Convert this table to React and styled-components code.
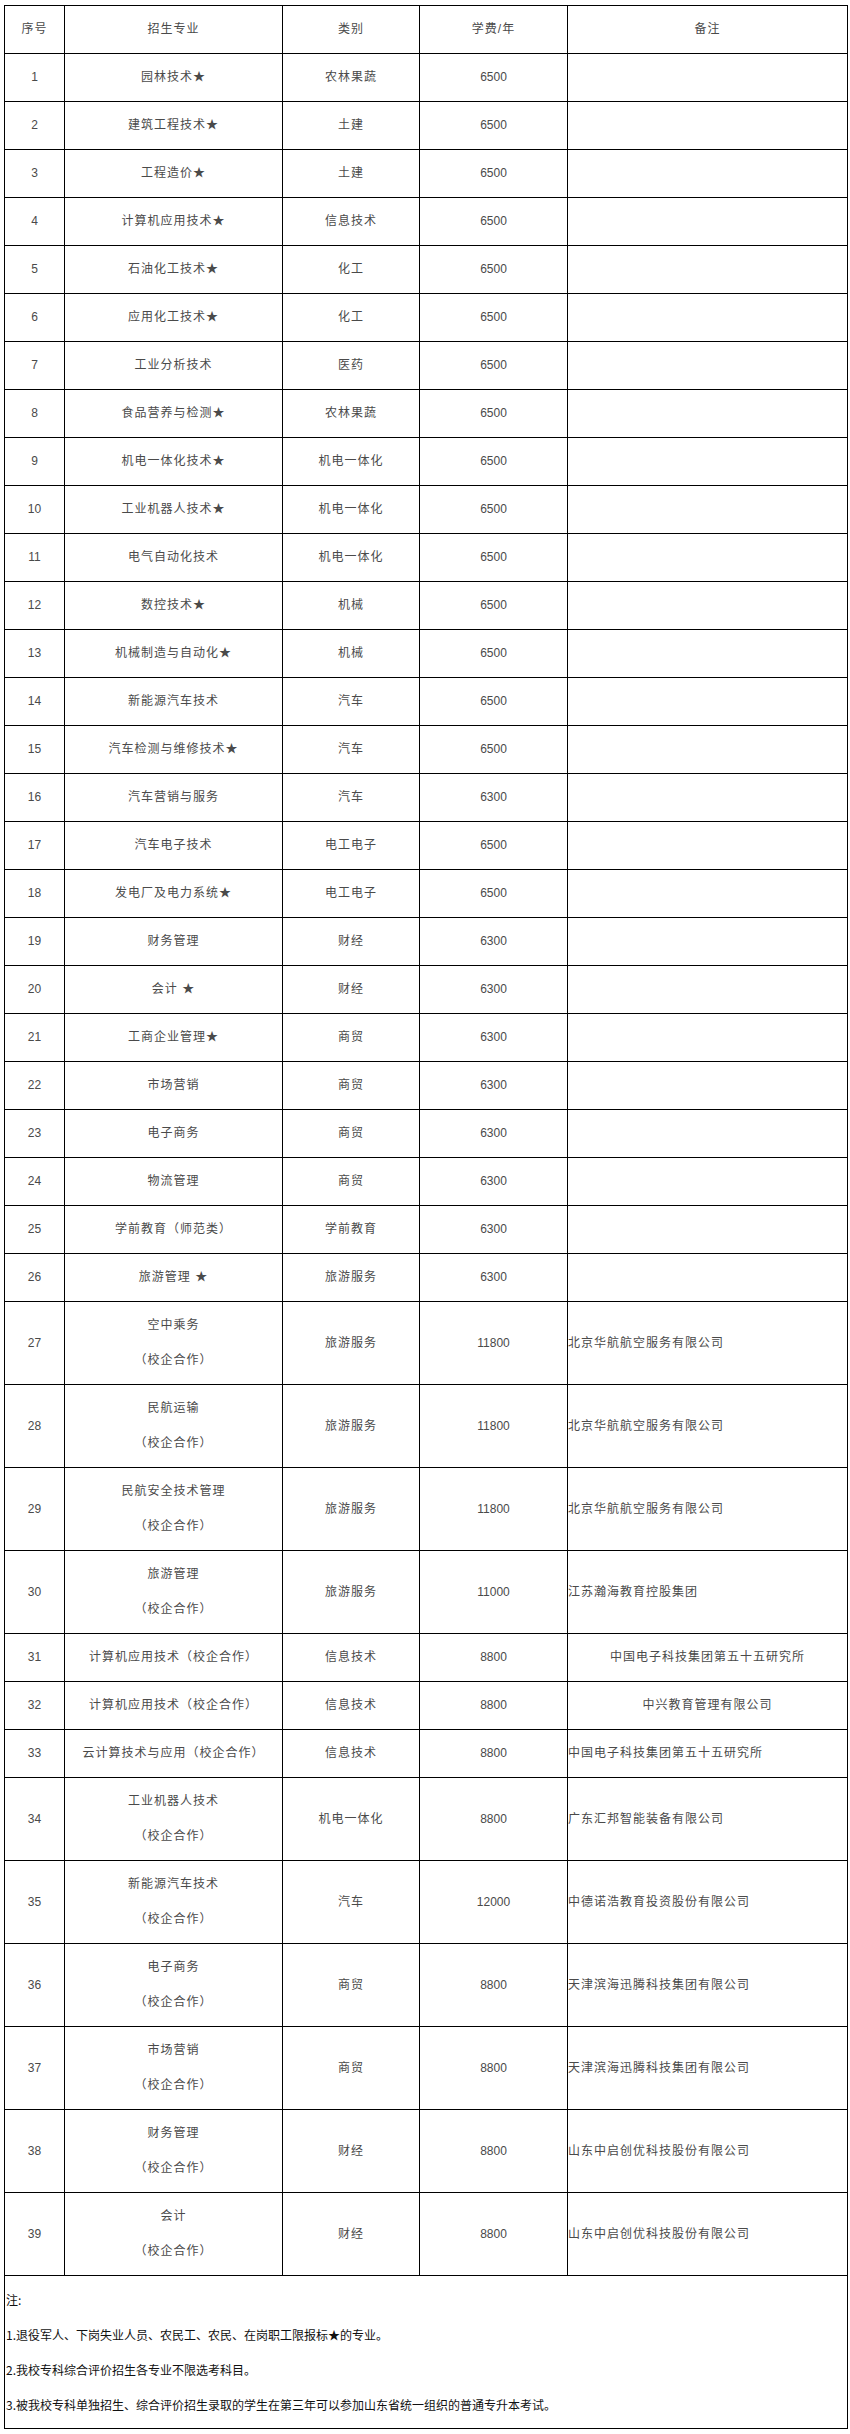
import React from "react";
import styled, { createGlobalStyle } from "styled-components";

const GlobalStyle = createGlobalStyle`
    body {
        margin: 0;
        background: #fff;
    }
`;

const Page = styled.div`
    padding: 5px 3px 6px 4px;
`;

const Table = styled.table`
    width: 843px;
    border-collapse: collapse;
    table-layout: fixed;
    font-family: "Liberation Sans", "Noto Sans CJK SC", sans-serif;
    font-size: 12px;
    color: #4a4a4a;
`;

const Cell = styled.td`
    border: 1px solid #000;
    padding: 6px 0;
    text-align: ${({ $align }) => $align || "center"};
    vertical-align: middle;
    line-height: 35px;
    letter-spacing: ${({ $num }) => ($num ? "0" : "1px")};
    white-space: nowrap;
`;

const Line = styled.div`
    line-height: 35px;
`;

const NoteCell = styled.td`
    border: 1px solid #000;
    padding: 6px 0 6px 1px;
    text-align: left;
    font-family: "Noto Sans CJK SC", "Liberation Sans", sans-serif;
    font-size: 12px;
    color: #111;
`;

const NoteLine = styled.p`
    margin: 0;
    line-height: 35px;
    white-space: nowrap;
`;

const CO = "（校企合作）";

const rows = [
    ["园林技术★", "农林果蔬", "6500"],
    ["建筑工程技术★", "土建", "6500"],
    ["工程造价★", "土建", "6500"],
    ["计算机应用技术★", "信息技术", "6500"],
    ["石油化工技术★", "化工", "6500"],
    ["应用化工技术★", "化工", "6500"],
    ["工业分析技术", "医药", "6500"],
    ["食品营养与检测★", "农林果蔬", "6500"],
    ["机电一体化技术★", "机电一体化", "6500"],
    ["工业机器人技术★", "机电一体化", "6500"],
    ["电气自动化技术", "机电一体化", "6500"],
    ["数控技术★", "机械", "6500"],
    ["机械制造与自动化★", "机械", "6500"],
    ["新能源汽车技术", "汽车", "6500"],
    ["汽车检测与维修技术★", "汽车", "6500"],
    ["汽车营销与服务", "汽车", "6300"],
    ["汽车电子技术", "电工电子", "6500"],
    ["发电厂及电力系统★", "电工电子", "6500"],
    ["财务管理", "财经", "6300"],
    ["会计 ★", "财经", "6300"],
    ["工商企业管理★", "商贸", "6300"],
    ["市场营销", "商贸", "6300"],
    ["电子商务", "商贸", "6300"],
    ["物流管理", "商贸", "6300"],
    ["学前教育（师范类）", "学前教育", "6300"],
    ["旅游管理 ★", "旅游服务", "6300"],
    [["空中乘务", CO], "旅游服务", "11800", "北京华航航空服务有限公司"],
    [["民航运输", CO], "旅游服务", "11800", "北京华航航空服务有限公司"],
    [["民航安全技术管理", CO], "旅游服务", "11800", "北京华航航空服务有限公司"],
    [["旅游管理", CO], "旅游服务", "11000", "江苏瀚海教育控股集团"],
    ["计算机应用技术（校企合作）", "信息技术", "8800", "中国电子科技集团第五十五研究所", "center"],
    ["计算机应用技术（校企合作）", "信息技术", "8800", "中兴教育管理有限公司", "center"],
    ["云计算技术与应用（校企合作）", "信息技术", "8800", "中国电子科技集团第五十五研究所"],
    [["工业机器人技术", CO], "机电一体化", "8800", "广东汇邦智能装备有限公司"],
    [["新能源汽车技术", CO], "汽车", "12000", "中德诺浩教育投资股份有限公司"],
    [["电子商务", CO], "商贸", "8800", "天津滨海迅腾科技集团有限公司"],
    [["市场营销", CO], "商贸", "8800", "天津滨海迅腾科技集团有限公司"],
    [["财务管理", CO], "财经", "8800", "山东中启创优科技股份有限公司"],
    [["会计", CO], "财经", "8800", "山东中启创优科技股份有限公司"],
];

const notes = [
    "注:",
    "1.退役军人、下岗失业人员、农民工、农民、在岗职工限报标★的专业。",
    "2.我校专科综合评价招生各专业不限选考科目。",
    "3.被我校专科单独招生、综合评价招生录取的学生在第三年可以参加山东省统一组织的普通专升本考试。",
];

const App = () => (
    <Page>
        <GlobalStyle />
        <Table>
            <colgroup>
                <col style={{ width: 60 }} />
                <col style={{ width: 218 }} />
                <col style={{ width: 137 }} />
                <col style={{ width: 148 }} />
                <col style={{ width: 280 }} />
            </colgroup>
            <tbody>
                <tr>
                    <Cell>序号</Cell>
                    <Cell>招生专业</Cell>
                    <Cell>类别</Cell>
                    <Cell>学费/年</Cell>
                    <Cell>备注</Cell>
                </tr>
                {rows.map(([major, kind, fee, note, noteAlign], i) => (
                    <tr key={i}>
                        <Cell $num>{i + 1}</Cell>
                        <Cell>
                            {Array.isArray(major)
                                ? major.map((m) => <Line key={m}>{m}</Line>)
                                : major}
                        </Cell>
                        <Cell>{kind}</Cell>
                        <Cell $num>{fee}</Cell>
                        <Cell $align={noteAlign || "left"}>{note || ""}</Cell>
                    </tr>
                ))}
                <tr>
                    <NoteCell colSpan={5}>
                        {notes.map((n) => (
                            <NoteLine key={n}>{n}</NoteLine>
                        ))}
                    </NoteCell>
                </tr>
            </tbody>
        </Table>
    </Page>
);

export default App;
